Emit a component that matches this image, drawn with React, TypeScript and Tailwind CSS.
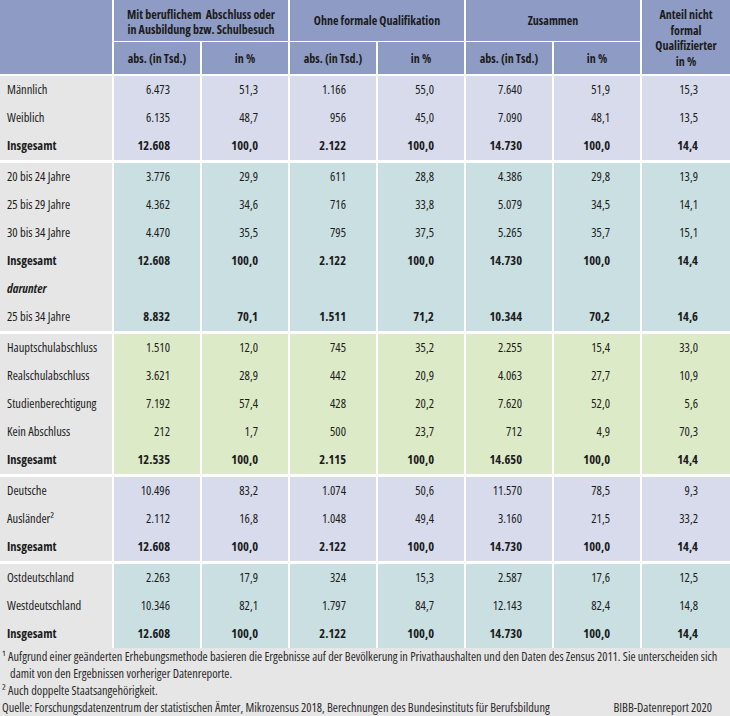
import React from 'react'

type Row = { label: string; values: string[]; bold?: boolean; boldValues?: boolean; italic?: boolean }
type Group = { bg: string; rows: Row[] }

const cols = 'grid grid-cols-[112px_repeat(6,86px)_88px] gap-x-[2px]'

const groups: Group[] = [
  {
    bg: 'bg-[#d7dbeb]',
    rows: [
      { label: 'Männlich', values: ['6.473', '51,3', '1.166', '55,0', '7.640', '51,9', '15,3'] },
      { label: 'Weiblich', values: ['6.135', '48,7', '956', '45,0', '7.090', '48,1', '13,5'] },
      { label: 'Insgesamt', values: ['12.608', '100,0', '2.122', '100,0', '14.730', '100,0', '14,4'], bold: true },
    ],
  },
  {
    bg: 'bg-[#c9dfe1]',
    rows: [
      { label: '20 bis 24 Jahre', values: ['3.776', '29,9', '611', '28,8', '4.386', '29,8', '13,9'] },
      { label: '25 bis 29 Jahre', values: ['4.362', '34,6', '716', '33,8', '5.079', '34,5', '14,1'] },
      { label: '30 bis 34 Jahre', values: ['4.470', '35,5', '795', '37,5', '5.265', '35,7', '15,1'] },
      { label: 'Insgesamt', values: ['12.608', '100,0', '2.122', '100,0', '14.730', '100,0', '14,4'], bold: true },
      { label: 'darunter', values: ['', '', '', '', '', '', ''], bold: true, italic: true },
      { label: '25 bis 34 Jahre', values: ['8.832', '70,1', '1.511', '71,2', '10.344', '70,2', '14,6'], boldValues: true },
    ],
  },
  {
    bg: 'bg-[#dceac7]',
    rows: [
      { label: 'Hauptschulabschluss', values: ['1.510', '12,0', '745', '35,2', '2.255', '15,4', '33,0'] },
      { label: 'Realschulabschluss', values: ['3.621', '28,9', '442', '20,9', '4.063', '27,7', '10,9'] },
      { label: 'Studienberechtigung', values: ['7.192', '57,4', '428', '20,2', '7.620', '52,0', '5,6'] },
      { label: 'Kein Abschluss', values: ['212', '1,7', '500', '23,7', '712', '4,9', '70,3'] },
      { label: 'Insgesamt', values: ['12.535', '100,0', '2.115', '100,0', '14.650', '100,0', '14,4'], bold: true },
    ],
  },
  {
    bg: 'bg-[#d7dbeb]',
    rows: [
      { label: 'Deutsche', values: ['10.496', '83,2', '1.074', '50,6', '11.570', '78,5', '9,3'] },
      { label: 'Ausländer²', values: ['2.112', '16,8', '1.048', '49,4', '3.160', '21,5', '33,2'] },
      { label: 'Insgesamt', values: ['12.608', '100,0', '2.122', '100,0', '14.730', '100,0', '14,4'], bold: true },
    ],
  },
  {
    bg: 'bg-[#c9dfe1]',
    rows: [
      { label: 'Ostdeutschland', values: ['2.263', '17,9', '324', '15,3', '2.587', '17,6', '12,5'] },
      { label: 'Westdeutschland', values: ['10.346', '82,1', '1.797', '84,7', '12.143', '82,4', '14,8'] },
      { label: 'Insgesamt', values: ['12.608', '100,0', '2.122', '100,0', '14.730', '100,0', '14,4'], bold: true },
    ],
  },
]

function HeaderCell({ children, className = '' }: { children: React.ReactNode; className?: string }) {
  return (
    <div className={`flex items-center justify-center bg-[#8e9bc4] text-center font-bold ${className}`}>
      {children}
    </div>
  )
}

function DataRow({ row, bg }: { row: Row; bg: string }) {
  const labelWeight = row.bold ? 'font-bold' : ''
  const valueWeight = row.bold || row.boldValues ? 'font-bold' : ''
  return (
    <div className={`${cols} h-[28px]`}>
      <div className={`flex items-center whitespace-nowrap bg-[#e6e6e6] pl-[7px] ${labelWeight} ${row.italic ? 'italic' : ''}`}>
        {row.label}
      </div>
      {row.values.map((v, i) => (
        <div
          key={i}
          className={`flex items-center justify-end ${bg} ${valueWeight} ${i === 6 ? 'pr-[32px]' : 'pr-[30px]'}`}
        >
          {v}
        </div>
      ))}
    </div>
  )
}

export default function App() {
  return (
    <div className="w-[730px] h-[716px] overflow-hidden bg-[#e6e6e6] text-[12.5px] text-[#1c1c1c] font-['Open_Sans','Noto_Sans',sans-serif] [font-stretch:75%]">
      <div className="bg-white">
        {/* header */}
        <div className={`${cols} grid-rows-[41px_32px] gap-y-[1px] text-[12px] leading-[15px]`}>
          <HeaderCell className="row-span-2">{''}</HeaderCell>
          <HeaderCell className="col-span-2 pt-[2px]">
            Mit beruflichem&nbsp; Abschluss oder
            <br />
            in Ausbildung bzw. Schulbesuch
          </HeaderCell>
          <HeaderCell className="col-span-2">Ohne formale Qualifikation</HeaderCell>
          <HeaderCell className="col-span-2">Zusammen</HeaderCell>
          <HeaderCell className="row-span-2 pt-[2px] leading-[15.5px]">
            Anteil nicht
            <br />
            formal
            <br />
            Qualifizierter
            <br />
            in %
          </HeaderCell>
          <HeaderCell>abs. (in Tsd.)</HeaderCell>
          <HeaderCell>in %</HeaderCell>
          <HeaderCell>abs. (in Tsd.)</HeaderCell>
          <HeaderCell>in %</HeaderCell>
          <HeaderCell>abs. (in Tsd.)</HeaderCell>
          <HeaderCell>in %</HeaderCell>
        </div>

        {/* body */}
        <div className="flex flex-col gap-[3px] pt-[2px]">
          {groups.map((g, gi) => (
            <div key={gi} className="flex flex-col">
              {g.rows.map((r, ri) => (
                <DataRow key={ri} row={r} bg={g.bg} />
              ))}
            </div>
          ))}
        </div>
      </div>

      {/* footnotes */}
      <div className="px-[2px] text-[12.3px] leading-[17px] text-[#2a2a2a]">
        <p className="whitespace-nowrap">
          ¹ Aufgrund einer geänderten Erhebungsmethode basieren die Ergebnisse auf der Bevölkerung in Privathaushalten und den
          Daten des Zensus 2011. Sie unterscheiden sich
        </p>
        <p className="pl-[8px]">damit von den Ergebnissen vorheriger Datenreporte.</p>
        <p>² Auch doppelte Staatsangehörigkeit.</p>
        <div className="mt-[1px] flex justify-between whitespace-nowrap pr-[16px] leading-[15px]">
          <span>Quelle: Forschungsdatenzentrum der statistischen Ämter, Mikrozensus 2018, Berechnungen des Bundesinstituts für Berufsbildung</span>
          <span>BIBB-Datenreport 2020</span>
        </div>
      </div>
    </div>
  )
}
